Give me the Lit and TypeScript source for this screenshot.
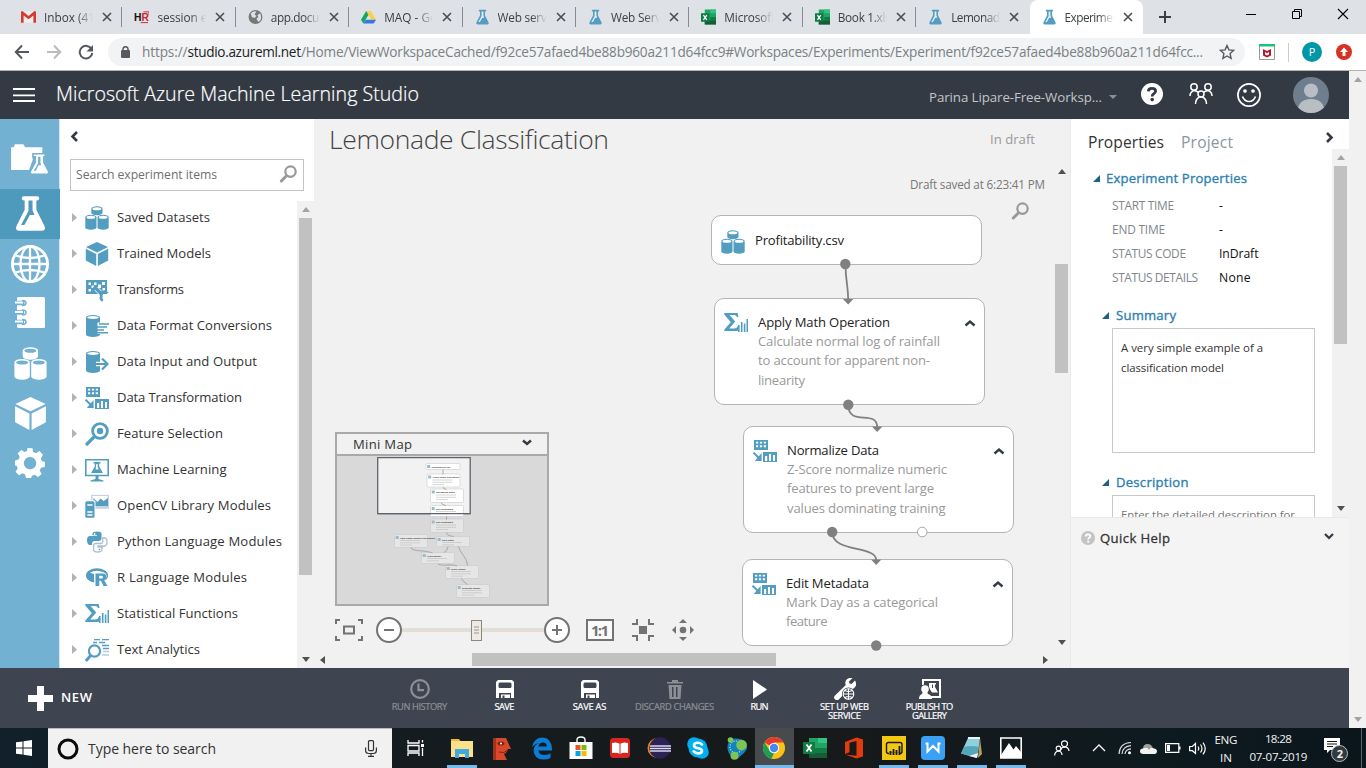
import { LitElement, html, css, svg, nothing } from "lit";
import { customElement, property } from "lit/decorators.js";

const BLUE = "#539dc0";

/** A single line of text, tracked so that it takes up exactly `w` pixels. */
@customElement("fit-text")
class FitText extends LitElement {
  @property() text = "";
  @property({ type: Number }) w = 0;
  static styles = css`
    :host { display: inline-block; white-space: pre; }
  `;
  firstUpdated() {
    const span = this.renderRoot.querySelector("span")!;
    const natural = span.getBoundingClientRect().width;
    const n = this.text.length;
    if (this.w && n > 1) {
      const gap = (this.w - natural) / (n - 1);
      this.style.letterSpacing = gap.toFixed(3) + "px";
      this.style.marginRight = (-gap).toFixed(3) + "px";
    }
  }
  render() {
    return html`<span>${this.text}</span>`;
  }
}

const t = (text: string, w: number) => html`<fit-text .text=${text} .w=${w}></fit-text>`;
const icon = (w: number, h: number, body: unknown, box = `0 0 ${w} ${h}`) =>
  html`<svg width=${w} height=${h} viewBox=${box} fill="none">${body}</svg>`;

/* ---------- shared drawings, all on a 24 by 24 field ---------- */
const drum = (x: number, y: number, w: number, h: number, c: string, hole: string) => svg`
  <path fill=${c} d="M${x} ${y + 2.4}a${w / 2} 2.4 0 0 1 ${w} 0v${h - 4.8}a${w / 2} 2.4 0 0 1 ${-w} 0z"/>
  <ellipse cx=${x + w / 2} cy=${y + 2.5} rx=${w / 2 - 1.2} ry="1.500" fill=${hole}/>`;
const drums = (c: string, hole: string) => svg`
  ${drum(6.3, 0.2, 11.2, 9, c, hole)}
  ${drum(0.3, 8.8, 11.2, 15, c, hole)}${drum(12.5, 8.8, 11.2, 15, c, hole)}`;
const cube = (c: string) => svg`
  <path fill=${c} d="M12 0 23 5 12 10.4 1 5zM.8 6.8l10.4 5.2v12L.8 18.4zM23.2 6.8l-10.4 5.2v12l10.4-5.6z"/>`;
const flask = (c: string, liquid: string) => svg`
  <path fill=${c} d="M6 1.6Q6 .2 7.4.2h9.2q1.4 0 1.4 1.4T16.6 3H16v6.500l5.600 11q1.200 3.300-2 3.300H4.400q-3.200 0-2-3.300L8 9.500V3h-.6Q6 3 6 1.600z"/>
  <path fill=${liquid} d="M10.600 3h2.800v7l1.400 3h-3.300l-1.500 3-2.200 3.800H5.500l5.100-9.500z"/>`;
const lens = svg`<circle cx="11.500" cy="6.600" r="5.200" stroke="#999" stroke-width="2.200"/><path stroke="#999" stroke-width="3" stroke-linecap="round" d="m7.300 11-5 5"/>`;
const reshape = svg`
  <path fill=${BLUE} fill-rule="evenodd" d="M1 0h14v10H1zM3 1.700v1.900h2.200V1.700zm3.900 0v1.900h2.200V1.700zm3.900 0v1.900H13V1.700zM3 5.300v1.900h2.200V5.300zm3.900 0v1.900h2.200V5.300zm3.900 0v1.900H13V5.300z"/>
  <path fill=${BLUE} fill-rule="evenodd" d="M10 12h14v10H10zm2 4v5h2.200v-5zm4-2v7h2v-7zm4 1v6h2v-6z"/>
  <path stroke=${BLUE} stroke-width="2" d="m.6 12.600 5.600 5.600"/><path fill=${BLUE} d="M8.600 13v8H1.800z"/>`;
const sigma = svg`
  <path fill=${BLUE} d="M.3 1h13.400l.8 4h-1.400q-.8-2.100-3-2.100H5.600l5.600 6.700-6 6.900h5q2.600 0 3.600-2.500h1.200L13.600 19H.3v-1.600l6.500-7.200L.3 2.600z"/>
  <path stroke=${BLUE} stroke-width="1.600" d="M14.800 13v7M17.700 10v10M20.600 11.500V20M23.300 7v13"/>`;
const chevron = (dir: "up" | "down") =>
  icon(12, 8, svg`<path stroke="#333a44" stroke-width="2.400" d=${dir === "up" ? "m1.500 6.500 4.500-4 4.500 4" : "m1.500 1.500 4.500 4 4.500-4"}/>`);

const paletteIcons: Record<string, unknown> = {
  drums: drums(BLUE, "#fff"),
  cube: cube(BLUE),
  transforms: svg`<path fill=${BLUE} d="M1 2h21v14H1z"/>
    <path fill="#fff" d="M3.500 4.500H6V7H3.500zM9 4.500h2.500V7H9zM17 4h3v3h-3zM3.500 11H6v2.500H3.500zM6.500 7.500H9V10H6.500zM13 6.500h3V10h-3zM17.500 10H20v3h-2.500z"/>
    <path stroke="#fff" stroke-width="4.600" d="m11 10.500 6 6"/><path stroke=${BLUE} stroke-width="3.400" d="m9 8.500 8.500 8.500"/>
    <path stroke=${BLUE} stroke-width="2.600" d="M22.300 15.300a3.300 3.300 0 0 0-6 3 3.300 3.300 0 0 0 1.500 4.300"/>`,
  format: svg`${drum(1, 1, 14, 22, BLUE, "#fff")}<path fill="#fff" d="M12.500 8.500H24V20H12.500z"/>
    <path stroke=${BLUE} stroke-width="1.500" d="M14 10h10M12 13h10M12 16h7M12 18.700h11"/>`,
  io: svg`${drum(1, 1, 14, 22, BLUE, "#fff")}<path stroke="#fff" stroke-width="4.600" d="M11 14h11M16.500 8l6 6-6 6"/>
    <path stroke=${BLUE} stroke-width="2.200" d="M11 14h11M17 8.500l5.500 5.500-5.500 5.500"/>`,
  reshape: svg`<g transform="translate(0 1)">${reshape}</g>`,
  feature: svg`<circle cx="15" cy="9" r="7.400" stroke=${BLUE} stroke-width="2.800"/><circle cx="15" cy="9" r="3.200" fill=${BLUE}/>
    <path stroke=${BLUE} stroke-width="3.200" stroke-linecap="round" d="m8.500 15.500-6.500 6.500"/>`,
  ml: svg`<path stroke=${BLUE} stroke-width="1.600" d="M.8 1.800h22.400v15.700H.8z"/><path fill=${BLUE} d="M10.500 18h3v3l5 1.500v1h-13v-1l5-1.500zM8.500 4h7v1.400h-1.300v3.100l3.800 6.500H6l3.800-6.500V5.400H8.500z"/>
    <path fill="#fff" d="M11.300 6h1.400v3.500l1 2h-3z"/>`,
  opencv: svg`<path fill="#c9d3de" d="M6 .8h18v14H6z"/><path fill="#fff" d="M7.500 2h15v8h-15z"/><path fill=${BLUE} d="m8 12 .5-8 4 4 3-3.500 3 2.500 4.500-3V12z"/>
    <rect x="-.8" y="6.300" width="11.300" height="18" rx="1.500" fill="#fff"/><rect x=".3" y="7.300" width="9.200" height="16.400" rx="1.500" fill=${BLUE}/><path stroke="#fff" stroke-width="1.500" d="M2.300 11h5.200M2.300 18h5.200M2.300 21h5.200"/>`,
  python: svg`<path fill=${BLUE} d="M7.500 6V3.600Q7.500 1.500 12 1.500t4.500 2.100v5q0 2.400-2.500 2.400H9.500Q7 11 7 14v1H5q-3 0-3-5 0-4 3-4h7v-.8H7.500z"/><circle cx="9.600" cy="4" r=".9" fill="#fff"/>
    <path stroke="#a9bfd2" stroke-width="1.300" d="M17.500 8h1.800q2.700 0 2.700 4t-2.700 4H13v1h4v2.500q0 2.500-4.300 2.500T8.600 19.500v-4q0-2 2.200-2h5q2 0 2-2.500z"/><circle cx="14.500" cy="19.500" r=".8" fill=${BLUE}/>`,
  r: svg`<ellipse cx="12" cy="9.500" rx="9.800" ry="6" stroke=${BLUE} stroke-width="2.400"/><path fill=${BLUE} d="M3 6q-4 5 3 9.500h3V8z"/><path fill="#fff" d="M9.600 6.500H19q4 2 2 6l-1 2 4 6H9z"/>
    <path fill=${BLUE} fill-rule="evenodd" d="M10.500 7.500h7q4 .3 4 3.500 0 2.500-2.300 3.200L22.500 20h-4l-2.600-5.300h-1.700V20h-3.700zm3.700 2.300v2.800h2.400q1.400-.2 1.400-1.400t-1.400-1.400z"/>`,
  sigma: svg`<g transform="translate(0 1)">${sigma}</g>`,
  text: svg`<path stroke=${BLUE} stroke-width="1.300" d="M9 1.700h6M17 1.700h7M8 4.500h4M14 4.500h6M17 7.500h7M18 10.500h6"/><path stroke="#b9cbdb" stroke-width="1.500" d="M18 13.500h6M17 17h7"/>
    <circle cx="9.500" cy="13" r="5.600" stroke=${BLUE} stroke-width="2.200"/><path stroke=${BLUE} stroke-width="3" stroke-linecap="round" d="m5.200 18-3.500 4"/>`,
};

/* ---------- browser frame ---------- */
const gmail = svg`<path fill="#eee" d="M1 2h14v12H1z"/><path fill="#d93a2f" d="M0 3q0-1.500 1.500-1.500L8 7l6.500-5.500Q16 1.500 16 3v11h-2.800V6.500L8 10.500 2.800 6.500V14H0z"/>`;
const chromeFlask = svg`<g transform="scale(.667)">${flask(BLUE, "#e9f1f6")}</g>`;
const excel = svg`<path fill="#21a366" d="M4 0h12v16H4z"/><path fill="#33c481" d="M10 0h6v4h-6z"/><path fill="#185c37" d="M4 11.500h12V16H4z"/><path fill="#107c41" d="M0 4h9v9H0zM10 8h6v4h-6z"/><path stroke="#fff" stroke-width="1.400" d="m2.600 6 3.600 5M6.200 6l-3.600 5"/>`;
const tabs = [
  { text: "Inbox (41", w: 51, ic: gmail },
  { text: "session ex", w: 56, ic: svg`<text x="0" y="12" class="hr" fill="#111">H</text><text x="8" y="12" class="hr" fill="#d8232a">R</text><path stroke="#d8232a" d="M7 14h8M10 2.500h6v3"/>` },
  { text: "app.docum", w: 59, ic: svg`<circle cx="8" cy="8" r="7.400" fill="#777"/><path fill="#dee1e6" d="M3 4q3-3 6-2l-2 3 2 2-2 2-3-1zM10 6l3-2q2 4 0 8l-2 1-2-3 2-2z"/>` },
  { text: "MAQ - Go", w: 53, ic: svg`<path fill="#ffcf48" d="M5.500 1.500h5L16 11h-5z"/><path fill="#11a861" d="M5.500 1.500 0 11l2.500 4L8 5.700z"/><path fill="#3777e3" d="M5 11h11l-2.500 4h-11z"/>` },
  { text: "Web servi", w: 52, ic: chromeFlask },
  { text: "Web Servi", w: 53, ic: chromeFlask },
  { text: "Microsoft", w: 51, ic: excel },
  { text: "Book 1.xls", w: 53, ic: excel },
  { text: "Lemonade", w: 55, ic: chromeFlask },
  { text: "Experimen", w: 55, ic: chromeFlask, on: true },
];

@customElement("browser-frame")
class BrowserFrame extends LitElement {
  static styles = css`
    :host { display: block; font: 12px/16px "Open Sans", "Noto Sans", sans-serif; font-size: 11.800px; color: #3c4043; }
    svg { flex: none; display: block; }
    .strip { display: flex; height: 34px; background: #dee1e6; padding-left: 9px; box-sizing: border-box; }
    .tab { width: 113.400px; box-sizing: border-box; display: flex; align-items: center; padding: 0 10px 0 12px; }
    .tab + .tab::before { content: ""; width: 1px; height: 20px; background: #888c92; margin-left: -13px; margin-right: 12px; }
    .tab.on { background: #fff; border-radius: 8px 8px 0 0; }
    .tab.on::before { visibility: hidden; }
    .name { width: 49px; margin: 0 9px 0 8px; overflow: hidden; flex: none; -webkit-mask-image: linear-gradient(90deg, #000 68%, transparent); mask-image: linear-gradient(90deg, #000 68%, transparent); }
    .hr { font: bold 11px "Liberation Sans", sans-serif; }
    .plus { margin: 11px 0 0 16px; }
    .win { margin-left: auto; display: flex; gap: 34px; padding: 8px 17px 0 0; }
    .bar { display: flex; align-items: center; height: 36px; background: #fff; padding-left: 14px; }
    .nav { display: flex; gap: 16px; margin-right: 14px; }
    .omni { width: 1137px; height: 28px; border-radius: 14px; background: #f1f3f4; display: flex; align-items: center; box-sizing: border-box; padding: 0 10px 0 13px; font-size: 13.600px; color: #7b8084; }
    .omni .host { color: #202124; }
    .url { flex: 1; padding-left: 12px; white-space: nowrap; }
    .mc { margin-left: 14px; }
    .div { width: 1px; height: 19px; background: #ccc; margin: 0 13px 0 13px; }
    .me { width: 20px; height: 20px; border-radius: 50%; background: #0097a7; color: #fff; display: grid; place-items: center; margin-right: 14px; font-size: 11px; }
    .edge { height: 1px; background: #b3b5b2; }
  `;
  render() {
    return html`
      <div class="strip">
        ${tabs.map((b) => html`<div class="tab ${b.on ? "on" : ""}">
          ${icon(15, 16, b.ic, "0 0 16 16")}<span class="name">${t(b.text, b.w)}</span>
          ${icon(10, 10, svg`<path stroke="#4a4e52" stroke-width="1.600" d="m1 1 8 8M9 1 1 9"/>`)}</div>`)}
        <span class="plus">${icon(12, 12, svg`<path stroke="#3c4043" stroke-width="2" d="M6 0v12M0 6h12"/>`)}</span>
        <div class="win">
          ${icon(12, 12, svg`<path stroke="#000" d="M1 6.500h10"/>`)}
          ${icon(12, 12, svg`<path stroke="#000" d="M1.500 3.500h7v7h-7zM3.500 3.500v-2h7v7h-2"/>`)}
          ${icon(12, 12, svg`<path stroke="#000" stroke-width="1.100" d="m1 1 10 10M11 1 1 11"/>`)}
        </div>
      </div>
      <div class="bar">
        <div class="nav">
          ${icon(16, 16, svg`<path stroke="#55595e" stroke-width="2" d="M15 8H2M8 1.500 1.800 8 8 14.500"/>`)}
          ${icon(16, 16, svg`<path stroke="#b9bbbe" stroke-width="2" d="M1 8h13M8 1.500 14.200 8 8 14.500"/>`)}
          ${icon(16, 16, svg`<path stroke="#55595e" stroke-width="2" d="M13.500 5A6.300 6.300 0 1 0 14.300 9"/><path fill="#55595e" d="M15 1v6.500H8.500z"/>`)}
        </div>
        <div class="omni">
          ${icon(9, 12, svg`<rect y="4" width="9" height="8" rx="1" fill="#55595e"/><path stroke="#55595e" stroke-width="1.500" d="M2 5V3a2.500 2.300 0 0 1 5 0v2"/>`)}
          <span class="url">${t("https://", 45.500)}<span class="host">${t("studio.azureml.net", 113.500)}</span>${t("/Home/ViewWorkspaceCached/f92ce57afaed4be88b960a211d64fcc9#Workspaces/Experiments/Experiment/f92ce57afaed4be88b960a211d64fcc...", 902)}</span>
          ${icon(16, 16, svg`<path stroke="#55595e" stroke-width="1.400" d="m8 1.500 1.900 4.400 4.700.5-3.500 3.200 1 4.800L8 12l-4.100 2.400 1-4.800L1.400 6.400l4.700-.5z"/>`)}
        </div>
        <svg class="mc" width="16" height="16" viewBox="0 0 16 16" fill="none">
          <path fill="#fff" stroke="#999" d="M.5.500h15v15H.5z"/><path fill="#19c37d" d="M0 0h16v2.500H0z"/><path fill="#b4182d" d="M4 5l4 2 4-2v6.500L8 13.500l-4-2z"/><path fill="#fff" d="M6 8l2 1.200L10 8v2.500l-2 1-2-1z"/></svg>
        <span class="div"></span><span class="me">P</span>
        ${icon(16, 16, svg`<circle cx="8" cy="8" r="8" fill="#d93025"/><path fill="#fff" d="M8 3.500 12 8H9.500v4h-3V8H4z"/>`)}
      </div>
      <div class="edge"></div>`;
  }
}

/* ---------- scroll bars ---------- */
@customElement("scroll-bar")
class ScrollBar extends LitElement {
  @property({ type: Number }) from = 0;
  @property({ type: Number }) size = 0;
  @property({ type: Boolean, reflect: true }) flat = false;
  @property() up = "#505050";
  @property() down = "#505050";
  static styles = css`
    :host { display: flex; flex-direction: column; justify-content: space-between; align-items: center; width: 17px; background: #f1f1f1; position: relative; flex: none; box-sizing: border-box; padding: 6px 0; }
    :host([flat]) { flex-direction: row; width: auto; height: 17px; padding: 0 5px; }
    .thumb { position: absolute; left: 2px; width: 13px; background: #c1c1c1; }
    :host([flat]) .thumb { left: auto; top: 2px; height: 13px; width: auto; }
    svg { display: block; }
  `;
  render() {
    const place = this.flat ? `left:${this.from}px;width:${this.size}px` : `top:${this.from}px;height:${this.size}px`;
    return html`
      ${this.flat ? icon(5, 8, svg`<path fill=${this.up} d="M5 0v8L0 4z"/>`) : icon(8, 5, svg`<path fill=${this.up} d="M0 5h8L4 0z"/>`)}
      ${this.size ? html`<div class="thumb" style=${place}></div>` : nothing}
      ${this.flat ? icon(5, 8, svg`<path fill=${this.down} d="M0 0v8l5-4z"/>`) : icon(8, 5, svg`<path fill=${this.down} d="M0 0h8L4 5z"/>`)}`;
  }
}

/* ---------- studio header ---------- */
@customElement("studio-header")
class StudioHeader extends LitElement {
  static styles = css`
    :host { display: flex; height: 48px; background: #343a43; color: #fff; align-items: center; font-family: "Open Sans", "Noto Sans", sans-serif; padding: 0 20px 0 13px; box-sizing: border-box; }
    svg { display: block; flex: none; }
    .title { margin: -3px 0 0 21px; font-size: 19.600px; font-weight: 300; -webkit-text-stroke: .2px #fff; flex: 1; }
    .ws { font-size: 13.300px; color: #c3c5c9; display: flex; align-items: center; margin-right: 24px; padding-top: 3px; }
    .ws svg { margin-left: 7px; }
    .tools { display: flex; align-items: center; margin-top: -2px; }
    .people { margin-left: 26px; }
    .smile { margin: 2px 0 0 24px; }
    .face { margin: 2px 0 0 32px; }
  `;
  render() {
    return html`
      ${icon(22, 14, svg`<path stroke="#fff" stroke-width="1.800" d="M0 1h22M0 7.300h22M0 13h22"/>`)}
      <span class="title">${t("Microsoft Azure Machine Learning Studio", 363)}</span>
      <span class="ws">${t("Parina Lipare-Free-Worksp...", 173)}${icon(8, 4, svg`<path fill="#8b9097" d="M0 0h8L4 4z"/>`)}</span>
      <div class="tools">
        ${icon(22, 22, svg`<circle cx="11" cy="11" r="11" fill="#fff"/><path stroke="#343a43" stroke-width="2.800" d="M7.300 8.300Q7.500 5.300 11 5.300t3.600 2.800q0 1.800-2 2.800-1.400.8-1.400 2.600"/><circle cx="11.200" cy="16.600" r="1.800" fill="#343a43"/>`)}
        <svg class="people" width="24" height="22" viewBox="0 0 24 22" fill="none" stroke="#fff" stroke-width="1.500"><circle cx="5" cy="4" r="3.200"/><circle cx="19" cy="4" r="3.200"/><circle cx="12" cy="11" r="3"/><path d="M1 13q0-4 4-5.500 3 .5 4.500 2M23 13q0-4-4-5.500-3 .5-4.500 2M6.500 21q0-5 4-7h3q4 2 4 7"/></svg>
        <svg class="smile" width="24" height="24" viewBox="0 0 24 24" fill="none" stroke="#fff" stroke-width="1.700"><circle cx="12" cy="12" r="11.100"/><path d="M5.500 13.500q2 5 6.500 5t6.500-5"/><circle cx="8" cy="8" r="1" fill="#fff"/><circle cx="16" cy="8" r="1" fill="#fff"/></svg>
        <svg class="face" width="36" height="36" viewBox="0 0 36 36"><defs><clipPath id="a"><circle cx="18" cy="18" r="18"/></clipPath></defs><circle cx="18" cy="18" r="18" fill="#6f7e8e"/><g clip-path="url(#a)" fill="#b8bec4"><circle cx="18" cy="13.500" r="7"/><path d="M4.500 36q0-14 13.500-14t13.500 14z"/></g></svg>
      </div>`;
  }
}

/* ---------- left rail ---------- */
const rail = [
  icon(38, 31, svg`<path fill="#fff" d="M0 3h3l1-3h9l2 3h18v9H22l1 4-4 11H0z"/><path fill="#fff" stroke="#72b1d2" stroke-width="1.500" d="M23 10h13v3h-1.500v6l5 9.500q.5 3-2 3h-15q-3 0-2-3l5-9.500v-6H23z"/><path fill="#72b1d2" d="M28.500 13h2.500v7l1 2h-3l-3 6h-2l4.500-8z"/>`, "0 0 40 32"),
  icon(33, 35, flask("#fff", "#4e9abd"), "1 0 22 24"),
  icon(38, 38, svg`<g stroke="#fff" stroke-width="2.300"><circle cx="19" cy="19" r="17.600" stroke-width="2.800"/><ellipse cx="19" cy="19" rx="9.500" ry="17.600"/><path d="M19 1v36M1 19h36M4.500 10.500q14.500 5 29 0M4.500 27.500q14.500-5 29 0"/></g>`),
  icon(30, 31, svg`<path fill="#fff" d="M2 1.500Q2 0 3.500 0h25Q30 0 30 1.500v28q0 1.500-1.500 1.500h-25Q2 31 2 29.500z"/><g stroke="#72b1d2" stroke-width="4.600"><path d="M0 6h9.500M0 15.500h9M0 25h9"/></g><g stroke="#fff" stroke-width="1.800"><path d="M0 5.500h8M0 15h8M0 24.500h8"/></g><path stroke="#72b1d2" stroke-width="1.500" d="M7 3.500q4 0 4 2.500t-4 2.500M7 13q4 0 4 2.500T7 18M7 22.500q4 0 4 2.500t-4 2.500"/>`),
  icon(33, 35, drums("#fff", "#72b1d2"), "0 0 24 24"),
  icon(33, 35, cube("#fff"), "0 0 24 24"),
  icon(30, 30, svg`<path fill="#fff" fill-rule="evenodd" d="m12.500 0 5 .2.700 3.800 2.800 1.200L24.500 3 28 6.700l-2.200 3.500 1 2.800 3.200 1-.2 5-3.800.8-1.300 2.800 2 3.400-3.600 3-3.300-2.200-2.800 1-1 2.200h-5l-.8-3.500-2.700-1.200-3.500 2-3.500-3.500 2.200-3.300-1-2.700L0 17.500v-5l3.500-1 1.200-2.800L2.700 5.200 6.200 2l3.300 2 2.500-1zM15 9a6.200 6.200 0 1 0 .1 0z"/>`),
];

@customElement("side-rail")
class SideRail extends LitElement {
  static styles = css`
    :host { display: flex; flex-direction: column; width: 60px; box-sizing: border-box; background: #72b1d2; padding-top: 20px; border-right: 1px solid #d5e4ee; flex: none; }
    .item { height: 50px; width: 60px; display: grid; place-items: center; flex: none; box-sizing: border-box; padding-bottom: 1px; }
    .item:first-child { padding-bottom: 9px; }
    .item:nth-child(3) { padding-bottom: 0; }
    .item:nth-child(4) { padding-bottom: 3px; }
    .item:last-child { padding-bottom: 2px; }
    .item.on { background: #4e9abd; }
    svg { display: block; }
  `;
  render() {
    return rail.map((r, i) => html`<div class="item ${i === 1 ? "on" : ""}">${r}</div>`);
  }
}

/* ---------- module palette ---------- */
const modules: [string, string, number][] = [
  ["drums", "Saved Datasets", 93], ["cube", "Trained Models", 94], ["transforms", "Transforms", 67],
  ["format", "Data Format Conversions", 155], ["io", "Data Input and Output", 140], ["reshape", "Data Transformation", 125],
  ["feature", "Feature Selection", 106], ["ml", "Machine Learning", 109.500], ["opencv", "OpenCV Library Modules", 154],
  ["python", "Python Language Modules", 165], ["r", "R Language Modules", 130], ["sigma", "Statistical Functions", 121], ["text", "Text Analytics", 83],
];

@customElement("module-palette")
class ModulePalette extends LitElement {
  static styles = css`
    :host { display: flex; flex-direction: column; width: 254px; flex: none; background: #fff; color: #333; font: 13.100px/20px "Open Sans", "Noto Sans", sans-serif; border-right: 1px solid #f1f1f1; }
    svg { display: block; flex: none; }
    .back { padding: 12px 0 0 10px; height: 28px; }
    .search { margin: 0 10px 8px; height: 32px; border: 1px solid #c4c4c4; box-sizing: border-box; display: flex; align-items: center; justify-content: space-between; padding: 0 4px 0 5px; font-size: 12.200px; color: #6f6f6f; }
    .find { margin: -2px 1px 0 0; }
    .body { display: flex; flex: 1; min-height: 0; }
    .list { flex: 1; overflow: hidden; }
    .row { height: 36px; display: flex; align-items: center; padding-left: 12px; }
    .row .ic { margin: 2px 8px 0 8px; }
    scroll-bar { margin-top: 2px; }
  `;
  render() {
    return html`
      <div class="back">${icon(8, 11, svg`<path stroke="#333a44" stroke-width="2.600" d="M7 1 2.500 5.500 7 10"/>`)}</div>
      <div class="search">${t("Search experiment items", 141)}<span class="find">${icon(20, 20, svg`<g transform="translate(1 1)">${lens}</g>`)}</span></div>
      <div class="body">
        <div class="list">
          ${modules.map(([k, name, w]) => html`<div class="row">${icon(5, 9, svg`<path fill="#b3b3b3" d="M0 0v9l5-4.500z"/>`)}
            <span class="ic">${icon(24, 24, paletteIcons[k])}</span>${t(name, w)}</div>`)}
        </div>
        <scroll-bar .from=${17} .size=${357} up="#a3a3a3"></scroll-bar>
      </div>`;
  }
}

/* ---------- experiment canvas ---------- */
interface Step { x: number; y: number; h: number; kind: string; name: string; w: number; lines: [string, number][]; }
const steps: Step[] = [
  { x: 711, y: 215, h: 50, kind: "drums", name: "Profitability.csv", w: 89, lines: [] },
  { x: 714, y: 298, h: 107, kind: "sigma", name: "Apply Math Operation", w: 132, lines: [["Calculate normal log of rainfall", 182], ["to account for apparent non-", 172], ["linearity", 47]] },
  { x: 743, y: 426, h: 106.500, kind: "reshape", name: "Normalize Data", w: 92, lines: [["Z-Score normalize numeric", 160], ["features to prevent large", 147], ["values dominating training", 158.500]] },
  { x: 742, y: 559, h: 87, kind: "reshape", name: "Edit Metadata", w: 83, lines: [["Mark Day as a categorical", 152], ["feature", 41.500]] },
];
const OX = 315, OY = 163;

const mini: [number, number, number, number, string, number][] = [
  [426, 463.500, 34, 6, "Profitability.csv", 0], [427, 474, 33, 13, "Apply Math Operation", 3], [430.500, 489, 33, 13.500, "Normalize Data", 3], [430.500, 505.500, 33, 11, "Edit Metadata", 2],
  [430.500, 519, 33, 13.500, "Edit Metadata", 3], [394.500, 534.500, 33, 13, "Two-Class Logistic Regression", 3], [436.500, 536.500, 33, 10, "Split Data", 2], [421.500, 552.500, 33, 11, "Train Model", 2],
  [445.500, 565.500, 33, 13, "Score Model", 3], [456.500, 584.500, 33, 13, "Evaluate Model", 3],
];

@customElement("mini-map")
class MiniMap extends LitElement {
  static styles = css`
    :host { display: block; box-sizing: border-box; width: 214px; height: 174px; border: 2px solid #a9a9a9; font: 13.100px/20px "Open Sans", "Noto Sans", sans-serif; color: #333; }
    .head { height: 20px; border-bottom: 2px solid #a9a9a9; display: flex; align-items: center; justify-content: space-between; padding: 0 15px 0 16px; }
    .head svg { margin-top: -3px; }
    svg { display: block; }
    .tiny { font: bold 2.400px "Open Sans", sans-serif; fill: #444; }
  `;
  render() {
    return html`<div class="head">${t("Mini Map", 59)}${icon(10, 7, svg`<path stroke="#333a44" stroke-width="2.400" d="m1 1.500 4 3.500 4-3.500"/>`)}</div>
      <svg width="210" height="148" viewBox="337 456 210 148">
        <path fill="#d9d9d9" d="M337 456h210v148H337z"/>
        <path fill="#f2f2f2" stroke="#5d646e" stroke-width="1.300" d="M377.700 457.700h92.500v56h-92.500z"/>
        ${mini.map(([x, y, w, h, name, n], i) => svg`<rect x=${x} y=${y} width=${w} height=${h} rx="1" fill=${i < 4 ? "#fff" : "#e6e6e6"} stroke="#c9c9c9" stroke-width=".6"/>
          <rect x=${x + 1.200} y=${y + 1.500} width="3" height="3" fill="#9db9cd"/><text class="tiny" x=${x + 5.500} y=${y + 4}>${name}</text>
          ${Array.from({ length: n }, (_, k) => svg`<path stroke="#bbb" stroke-width=".6" d="M${x + 5.500} ${y + 6 + k * 2.300}h${k === n - 1 ? 12 : 20}"/>`)}`)}
        <g fill="none" stroke="#999" stroke-width=".8"><path d="M443 469.500v5M443 487q0 2 3.500 2.500M441 502.500q0 2 5 3M446.500 516.500v3M446.500 532.500q0 3 7 4M411 547.500q0 3 12 3.500 8 1 9.500 2M448 546.500q0 4-4 6M458.500 546.500q1 4 5 9 4 5 4 10M438 563.500q0 2 12 1.500 5 0 7 1M461.500 578.500q1 3 6 6"/></g>
        <path fill="none" stroke="#5d646e" stroke-width="1.300" d="M377.700 513.700h92.500"/>
      </svg>`;
  }
}

@customElement("experiment-canvas")
class ExperimentCanvas extends LitElement {
  static styles = css`
    :host { display: flex; flex-direction: column; width: 755px; flex: none; background: #f1f1f1; font: 13.100px/19px "Open Sans", "Noto Sans", sans-serif; border-right: 1px solid #e9e9e9; }
    svg { display: block; flex: none; }
    .head { height: 44px; box-sizing: border-box; display: flex; justify-content: space-between; padding: 0 35px 0 14px; color: #999; }
    .name { font-size: 26.500px; line-height: 41px; font-weight: 300; color: #444; }
    .state { line-height: 40px; }
    .body { flex: 1; display: flex; min-height: 0; }
    .surface { flex: 1; position: relative; overflow: hidden; }
    .saved { text-align: right; padding: 11px 8px 0 0; font-size: 11.700px; line-height: 20px; color: #777; }
    .find { display: flex; justify-content: flex-end; padding: 8px 24px 0 0; }
    .node { position: absolute; width: 271px; box-sizing: border-box; background: #fff; border: 1px solid #b4b4b4; border-radius: 10px; display: flex; padding: 13px 8px 0 9px; }
    .node.short { padding-top: 14px; }
    .copy { flex: 1; margin: 1px 0 0 10px; color: #999; }
    .copy .title { color: #222; }
    .copy div { height: 19.200px; white-space: nowrap; }
    .node .chev { margin-top: 7px; }
    .wires { position: absolute; inset: 0; }
    .map { position: absolute; left: 20px; top: 269px; }
    .tools { position: absolute; left: 20px; top: 454px; display: flex; align-items: center; height: 26px; }
    .out { margin-left: 13px; }
    .pan { margin-left: 18px; }
    .one { border: 2px solid #737373; width: 28px; height: 22px; box-sizing: border-box; font: bold 15px/18px "Open Sans", sans-serif; color: #737373; display: grid; place-items: center; margin: 0 18px 0 16px; background: #fafafa; }
    .rail { width: 142px; height: 4px; background: #e2ddd7; display: flex; align-items: center; justify-content: center; }
    .grip { width: 11px; height: 21px; box-sizing: border-box; border: 1px solid #8f887f; background: #efeae5; margin-left: 6px; display: grid; place-items: center; }
    .across { margin-right: 17px; }
  `;
  render() {
    return html`
      <div class="head"><span class="name">${t("Lemonade Classification", 280)}</span><span class="state">${t("In draft", 45)}</span></div>
      <div class="body">
        <div class="surface">
          <div class="saved">${t("Draft saved at 6:23:41 PM", 135)}</div>
          <div class="find">${icon(18, 18, lens, "0 0 18 18")}</div>
          ${steps.map((s) => html`<div class="node ${s.lines.length ? "" : "short"}" style="left:${s.x - OX}px;top:${s.y - OY}px;height:${s.h}px">
            ${icon(24, 24, s.kind === "drums" ? drums(BLUE, "#fff") : s.kind === "sigma" ? sigma : reshape)}
            <div class="copy"><div class="title">${t(s.name, s.w)}</div>${s.lines.map(([l, w]) => html`<div>${t(l, w)}</div>`)}</div>
            ${s.lines.length ? html`<span class="chev">${chevron("up")}</span>` : nothing}</div>`)}
          <svg class="wires" width="739" height="488" viewBox="315 163 739 488">
            <g fill="none" stroke="#808080" stroke-width="1.800">
              <path d="M845.500 264q0 10 1.500 20 1 8 1.200 15"/><path d="M848.300 405C848.300 427 877 409 877.200 427"/><path d="M832.200 532C832 553 876 545 876.200 560"/>
            </g>
            <g fill="#808080">
              <path d="M843 299h10.400l-5.200 5.500zM872 426.500h10.400l-5.200 5.500zM871 559.500h10.400l-5.200 5.500z"/>
              <circle cx="845.300" cy="264" r="5.200"/><circle cx="848.300" cy="404.700" r="5.200"/><circle cx="832.200" cy="532" r="5.200"/><circle cx="876.200" cy="645.500" r="5.200"/>
            </g>
            <circle cx="922.200" cy="532" r="4.800" fill="#fff" stroke="#a8a8a8"/>
          </svg>
          <mini-map class="map"></mini-map>
          <div class="tools">
            ${icon(28, 22, svg`<g stroke="#737373" stroke-width="2"><path d="M1 5V1h4M23 1h4v4M27 17v4h-4M5 21H1v-4M9 7.500h10v7H9z"/></g>`)}
            <svg class="out" width="26" height="26" viewBox="0 0 26 26" fill="none"><circle cx="13" cy="13" r="12" fill="#fff" stroke="#737373" stroke-width="2"/><path stroke="#737373" stroke-width="2" d="M8 13h10"/></svg>
            <div class="rail"><div class="grip">${icon(5, 8, svg`<path stroke="#9a938b" d="M0 1h5M0 4h5M0 7h5"/>`)}</div></div>
            ${icon(26, 26, svg`<circle cx="13" cy="13" r="12" fill="#fff" stroke="#737373" stroke-width="2"/><path stroke="#737373" stroke-width="2" d="M8 13h10M13 8v10"/>`)}
            <span class="one">${t("1:1", 18)}</span>
            ${icon(22, 22, svg`<path fill="#737373" d="M7 7h8v8H7z"/><path stroke="#737373" stroke-width="2" d="M0 5h5V0M17 0v5h5M22 17h-5v5M5 22v-5H0"/>`)}
            <svg class="pan" width="22" height="22" viewBox="0 0 22 22" fill="#737373"><circle cx="11" cy="11" r="3.300"/><path d="M7 4h8l-4-4zM7 18h8l-4 4zM4 7v8l-4-4zM18 7v8l4-4z"/></svg>
          </div>
        </div>
        <scroll-bar .from=${101} .size=${109}></scroll-bar>
      </div>
      <scroll-bar class="across" flat .from=${157} .size=${304}></scroll-bar>`;
  }
}

/* ---------- properties ---------- */
@customElement("property-panel")
class PropertyPanel extends LitElement {
  static styles = css`
    :host { display: flex; flex-direction: column; width: 278px; flex: none; background: #fff; box-sizing: border-box; font: 12.200px/24px "Open Sans", "Noto Sans", sans-serif; color: #111; }
    svg { display: block; flex: none; }
    .tabs { height: 30px; display: flex; padding: 0 15px 0 17px; font-size: 15.600px; color: #333; box-sizing: border-box; }
    .tabs > * { padding-top: 11px; margin-right: 17px; }
    .tabs .off { color: #8f959b; }
    .tabs .chev { margin: 2px 0 0 auto; }
    .body { flex: 1; display: flex; min-height: 0; }
    .form { flex: 1; overflow: hidden; padding: 17px 0 0 22px; }
    .h { display: flex; align-items: center; color: #2d80b0; font-size: 13.100px; font-weight: 400; -webkit-text-stroke: .35px #2d80b0; height: 24px; gap: 6px; }
    .h.sub { margin-left: 9px; gap: 7px; }
    .row { display: flex; margin-left: 19px; height: 24px; }
    .row.first { margin-top: 3px; }
    .k { width: 107px; color: #80868b; font-size: 11.900px; }
    .v { padding-top: .6px; }
    .box { margin: 1px 0 0 19px; width: 203px; height: 125px; box-sizing: border-box; border: 1px solid #c9c9c9; padding: 9px 8px; font-size: 11.400px; line-height: 20px; color: #333; }
    .gap { height: 14px; }
    .gap.two { height: 17px; }
    .box.ph { color: #777; }
    .help { height: 151px; background: #f4f4f4; border-top: 1px solid #e9e9e9; box-sizing: border-box; display: flex; align-items: flex-start; padding: 11px 15px 0 10px; font-size: 13.100px; line-height: 18px; color: #333; -webkit-text-stroke: .3px #333; }
    .help span { margin-left: 5px; flex: 1; }
    .help .q { margin-top: 2px; }
    .help .d { margin-top: 4px; }
  `;
  head(text: string, w: number, sub = false) {
    return html`<div class="h ${sub ? "sub" : ""}">${icon(7, 7, svg`<path fill="#1c6187" d="M7 0v7H0z"/>`)}${t(text, w)}</div>`;
  }
  render() {
    const rows: [string, number, string, number][] = [["START TIME", 62, "-", 0], ["END TIME", 53, "-", 0], ["STATUS CODE", 74, "InDraft", 39.500], ["STATUS DETAILS", 86, "None", 31.500]];
    return html`
      <div class="tabs"><span>${t("Properties", 76)}</span><span class="off">${t("Project", 52)}</span><span class="chev">${icon(8, 11, svg`<path stroke="#333a44" stroke-width="2.600" d="m1 1 4.500 4.500L1 10"/>`)}</span></div>
      <div class="body">
        <div class="form">
          ${this.head("Experiment Properties", 141)}
          ${rows.map(([k, w, v, vw], i) => html`<div class="row ${i ? "" : "first"}"><span class="k">${t(k, w)}</span><span class="v">${t(v, vw)}</span></div>`)}
          <div class="gap"></div>
          ${this.head("Summary", 60, true)}
          <div class="box">${t("A very simple example of a", 142)}<br>${t("classification model", 103)}</div>
          <div class="gap two"></div>
          ${this.head("Description", 72.500, true)}
          <div class="box ph">${t("Enter the detailed description for", 174)}</div>
        </div>
        <scroll-bar .from=${17} .size=${178} up="#a3a3a3"></scroll-bar>
      </div>
      <div class="help"><svg class="q" width="14" height="14" viewBox="0 0 14 14" fill="none"><circle cx="7" cy="7" r="7" fill="#c4c4c4"/><path stroke="#fff" stroke-width="1.800" d="M4.700 5.500Q4.800 3.300 7 3.300t2.300 1.900q0 1.200-1.300 1.800-.8.500-.8 1.500"/><circle cx="7.200" cy="10.700" r="1.100" fill="#fff"/></svg>
        <span>${t("Quick Help", 70)}</span><svg class="d" width="10" height="7" viewBox="0 0 10 7" fill="none"><path stroke="#333a44" stroke-width="2.200" d="m1 1 4 4 4-4"/></svg></div>`;
  }
}

/* ---------- command bar ---------- */
const floppy = icon(18, 18, svg`<path fill="#fff" fill-rule="evenodd" d="M2 0h14l2 2v16h-3v-5H3v5H0V2zM4 2.500q-1.500 0-1.500 1.500v2.500Q2.500 8 4 8h10q1.500 0 1.500-1.500V4q0-1.500-1.500-1.500z"/><path fill="#fff" fill-rule="evenodd" d="M5 14.500h9V18H5zm1.500 1V18h2v-2.500z"/>`);
const commands: { ic: unknown; lines: [string, number][]; off?: boolean }[] = [
  { ic: icon(20, 20, svg`<circle cx="10" cy="10" r="8.800" stroke="#8b9097" stroke-width="2.200"/><path stroke="#8b9097" stroke-width="2.200" d="M8.500 4.500v6.700H14"/>`), lines: [["RUN HISTORY", 55.500]], off: true },
  { ic: floppy, lines: [["SAVE", 20]] },
  { ic: floppy, lines: [["SAVE AS", 33.500]] },
  { ic: icon(16, 19, svg`<path fill="#8b9097" fill-rule="evenodd" d="M0 2h5V0h6v2h5v1.500H0zM1.500 5h13l-1 14h-11zM5 7v10h1.500V7zm4 0v10h1.500V7z"/>`), lines: [["DISCARD CHANGES", 79]], off: true },
  { ic: icon(14, 19, svg`<path fill="#fff" d="m0 0 14 9.500L0 19z"/>`), lines: [["RUN", 18]] },
  { ic: icon(22, 22, svg`<path fill="#fff" d="M21 2.500 17.500 6l-2-.5-.5-2L18.500 0Q13-.500 11.500 3.500q-.5 2 .3 3.500L1 17.500q-2 2 0 3.800t4 0L15 11q5 1 7-3.500.5-2.500-1-5z"/><circle cx="14.500" cy="16" r="6.500" fill="#3f4550"/><g stroke="#fff" stroke-width="1.100"><circle cx="14.500" cy="16" r="5.300"/><path d="M9 16h11M14.500 10.500v11M11 12.500q3.500 2 7 0M11 19.500q3.500-2 7 0"/></g>`), lines: [["SET UP WEB", 49], ["SERVICE", 33]] },
  { ic: icon(22, 20, svg`<path stroke="#fff" stroke-width="2" d="M4 6V1h17v17h-9"/><path fill="#fff" d="M10 4h7v1.500h-1V8l3 5.500H13L10 9z"/><path stroke="#3f4550" d="M13.500 5.500V9"/><circle cx="6" cy="10" r="4.600" fill="#3f4550"/><circle cx="6" cy="10" r="3.800" fill="#fff"/><path fill="#fff" d="M4 12h4l1 3q4 1 4 5H0q0-4 3-5z"/>`), lines: [["PUBLISH TO", 47.500], ["GALLERY", 35]] },
];

@customElement("command-bar")
class CommandBar extends LitElement {
  static styles = css`
    :host { display: flex; height: 60px; background: #3f4550; color: #fff; font: 9.300px/9.300px "Open Sans", "Noto Sans", sans-serif; }
    svg { display: block; }
    .new { width: 349px; display: flex; align-items: center; padding-left: 28px; gap: 8px; font-size: 13px; font-weight: 600; }
    .cmd { width: 85px; display: flex; flex-direction: column; align-items: center; -webkit-text-stroke: .2px; }
    .cmd.off { color: #8b9097; }
    .ic { height: 34px; display: grid; place-items: center; padding-top: 8px; box-sizing: border-box; margin-bottom: -.5px; }
    .line { height: 9.300px; }
  `;
  render() {
    return html`<div class="new">${icon(25, 25, svg`<path fill="#fff" d="M9 0h7v9h9v7h-9v9H9v-9H0V9h9z"/>`)}${t("NEW", 31)}</div>
      ${commands.map((c) => html`<div class="cmd ${c.off ? "off" : ""}"><div class="ic">${c.ic}</div>${c.lines.map(([l, w]) => html`<div class="line">${t(l, w)}</div>`)}</div>`)}`;
  }
}

/* ---------- desktop task bar ---------- */
const apps: { ic: unknown; open?: boolean; on?: boolean }[] = [
  { open: true, ic: svg`<path fill="#f5b83d" d="M1 3h8l2 3H1z"/><path fill="#ffe08a" d="M1 5h22v16H1z"/><path fill="#3fa9e0" d="M5 13h14v9h-4v-4H9v4H5z"/>` },
  { ic: svg`<path fill="#d9482b" d="M2 2h13l5 11h-3q-1 4-4 5l3 6H2z"/><path fill="#a7321b" d="M2 2h3v22H2z"/><ellipse cx="10" cy="7.500" rx="3.500" ry="2" fill="#7e2413"/><circle cx="10" cy="7.500" r="1" fill="#fff"/><path stroke="#7e2413" d="M8 16q5 2 9-2"/>` },
  { ic: svg`<path fill="#0c7cd5" d="M2 11Q4 1.500 12.500 1.500T22 12.500v2H8.500q.5 4.500 6 4.500 4 0 6-1.800V22q-3 1.500-7 1.500Q4 23.500 3.500 14 4 9 9 7q-4 .5-7 4zM8.500 10.500h8.300Q16.800 6.500 13 6.500T8.500 10.500z"/>` },
  { ic: svg`<path stroke="#fff" stroke-width="1.400" d="M8 7V4q0-3 4-3t4 3v3"/><path fill="#fff" d="M.5 6h23v17H.5z"/><path fill="#f25022" d="M6.500 9h5v5h-5z"/><path fill="#7fba00" d="M12.500 9h5v5h-5z"/><path fill="#00a4ef" d="M6.500 15h5v5h-5z"/><path fill="#ffb900" d="M12.500 15h5v5h-5z"/>` },
  { ic: svg`<rect x="2" y="2" width="20" height="20" rx="3.500" fill="#d7261e"/><path fill="#fff" d="M4 7q5-1.500 8 1 3-2.500 8-1v10q-5-1-8 1-3-2-8-1z"/><path stroke="#d7261e" d="M12 8v10"/>` },
  { ic: svg`<circle cx="10.500" cy="12" r="10" fill="#e8891c"/><circle cx="13" cy="12" r="10.700" fill="#2c2255"/><path stroke="#d9d9ef" stroke-width="1.500" d="M3 10h21M3 12.500h21M3 15h21"/>` },
  { ic: svg`<circle cx="8" cy="8" r="6.800" fill="#00aff0"/><circle cx="16" cy="16" r="6.800" fill="#00aff0"/><circle cx="12" cy="12" r="9.500" fill="#00aff0"/><path stroke="#fff" stroke-width="2.600" stroke-linecap="round" d="M16 8.500Q14.500 6.800 12 6.800q-4 0-4 2.700 0 2 4 2.700t4 2.600q0 2.600-4 2.600-3 0-4.300-2.100"/>` },
  { ic: svg`<path fill="#1583b8" d="M6 3q9-2 15 3 3 6-2 11l-7 6q-8-2-9.500-10Q2 7 6 3z"/><circle cx="11" cy="11" r="6" stroke="#b8e5f5" stroke-width="1.200" stroke-dasharray="1 1.500"/><circle cx="5.500" cy="4" r="2.800" fill="#7cc455"/><circle cx="16.500" cy="9" r="5.300" fill="#7cc455"/><circle cx="9.500" cy="19.800" r="4" fill="#7cc455"/>` },
  { open: true, on: true, ic: svg`<circle cx="12" cy="12" r="11" fill="#fbc116"/><path fill="#e33b2e" d="M12 12 2.500 6.500A11 11 0 0 1 21.500 6.500H12z"/><path fill="#1f9d55" d="M2.500 6.500 8 15l4 2-2.500 5.800A11 11 0 0 1 2.500 6.500z"/><circle cx="12" cy="12" r="5.200" fill="#fff"/><circle cx="12" cy="12" r="4.200" fill="#4587f3"/>` },
  { ic: svg`<path fill="#21a366" d="M6 2h18v20H6z"/><path fill="#33c481" d="M15 2h9v5h-9z"/><path fill="#185c37" d="M6 17h18v5H6z"/><path fill="#107c41" d="M0 6h12v12H0zM12 12h12v5H12z"/><path stroke="#fff" stroke-width="1.800" d="m3.500 8.500 5 7M8.500 8.500l-5 7"/>` },
  { ic: svg`<path fill="#e23c0c" d="M3 6 14.500 1.500 21 3.500v17l-6.500 2L3 18.500l11.500 1.300V5L7.500 6.800v9.400L3 18z"/>` },
  { open: true, ic: svg`<path fill="#f2c811" d="M0 0h24v24H0z"/><rect x="4.500" y="6.500" width="15.500" height="11" rx="2" stroke="#1a1a1a" stroke-width="1.400"/><path stroke="#f2c811" stroke-width="3" d="M7 18.500h11"/><path stroke="#1a1a1a" stroke-width="1.800" d="M8.500 19v-4M11.500 19v-6M14.500 19v-5M17.500 19v-9"/>` },
  { open: true, ic: svg`<rect width="24" height="24" rx="4" fill="#3aa1f5"/><path stroke="#fff" stroke-width="2" d="M4.500 7.500H6.500V15.500L12 10l5.500 5.500V7.500h2"/>` },
  { open: true, ic: svg`<path fill="#b99a5a" d="m20 2 2 16-4 4z"/><path fill="#8ed0dd" d="m8 2 12 .5-3 19.500L1 17.500z"/><path fill="#55a6b9" d="M4 11q7-2 15 0l-2 11-16-4.500z"/><path stroke="#e8f6f8" stroke-width="2" d="M8 2h12"/><path fill="#eef" d="m9 20 8 2 1-5z"/>` },
  { open: true, ic: svg`<path stroke="#fff" stroke-width="1.600" d="M1.800 2h20.400v20H1.800z"/><path fill="#fff" d="M2 19 10 7l4.500 6.500L17 10l5 6v6H2z"/>` },
];

@customElement("task-bar")
class TaskBar extends LitElement {
  static styles = css`
    :host { display: flex; height: 40px; background: linear-gradient(90deg, #11202a 0, #161b1d 40%, #17191a 62%, #0d1a20 85%, #0b161c); font: 11.600px/18px "Open Sans", "Noto Sans", sans-serif; color: #f2f2f2; }
    svg { display: block; flex: none; }
    .start { width: 48px; display: grid; place-items: center; }
    .search { width: 344px; box-sizing: border-box; border-top: 1px solid #b8babc; background: #f1f1f1; color: #333; display: flex; align-items: center; padding: 0 15px 0 9px; font-size: 14px; }
    .search .q { flex: 1; padding-left: 9px; }
    .view { width: 50px; display: flex; align-items: center; padding-left: 15px; box-sizing: border-box; }
    .app { width: 39.100px; flex: none; display: grid; place-items: center; box-sizing: border-box; padding-top: 3px; border-bottom: 3px solid transparent; }
    .app.open { border-bottom: 3px solid #76b9ed; background-clip: padding-box; margin: 0 4.500px; width: 30.100px; }
    .app.first { margin-right: 6.500px; }
    .app.on { background: #474b4d; margin: 0 2px 0 -2px; width: 39.100px; }
    .tray { flex: 1; display: flex; align-items: center; padding-left: 24px; }
    .tray > svg { margin-right: 8px; }
    .tray .people { margin-right: 22px; }
    .tray .caret { margin-right: 12px; }
    .two { display: flex; flex-direction: column; align-items: center; padding-top: 1px; }
    .two + .two { margin-left: 12px; padding: 0; }
    .badge { position: relative; margin: -6px 0 0 17px; }
    .badge b { position: absolute; left: 7px; top: 7px; width: 15px; height: 15px; border-radius: 50%; background: #333a3e; border: 1px solid #b9bcbd; font: bold 11px/15px "Open Sans", sans-serif; text-align: center; }
    .end { margin-left: auto; width: 1px; height: 40px; background: #5d6568; margin-right: 4px; }
  `;
  render() {
    return html`
      <div class="start">${icon(16, 16, svg`<path fill="#fff" d="M0 2.300 6.500 1.400v6.100H0zM7.500 1.200 16 0v7.500H7.500zM0 8.500h6.500v6.100L0 13.700zM7.500 8.500H16V16l-8.500-1.200z"/>`)}</div>
      <div class="search">${icon(22, 22, svg`<circle cx="11" cy="11" r="9" stroke="#0b0b0b" stroke-width="3"/>`)}<span class="q">${t("Type here to search", 128)}</span>
        ${icon(12, 17, svg`<rect x="3.500" y=".600" width="5" height="10" rx="1" stroke="#333" stroke-width="1.200"/><path stroke="#333" stroke-width="1.200" d="M.6 7.500v3q0 3 3 3h4.800q3 0 3-3v-3M6 13.500V16M3 16.300h6"/>`)}</div>
      <div class="view">${icon(18, 16, svg`<path stroke="#fff" stroke-width="1.300" d="M1 0v3h11V0M1 5.500h11v5.500H1zM1 16v-3h11v3M15.500 0v2.500M15.500 8v8"/><path fill="#fff" d="M14 4h3v3h-3z"/>`)}</div>
      ${apps.map((a, i) => html`<div class="app ${a.open ? "open" : ""} ${a.on ? "on" : ""} ${i ? "" : "first"}">${icon(24, 24, a.ic)}</div>`)}
      <div class="tray">
        <svg class="people" width="16" height="16" viewBox="0 0 16 16" fill="none" stroke="#fff" stroke-width="1.200"><circle cx="10.500" cy="3.800" r="3"/><circle cx="4.500" cy="8.500" r="2.300"/><path d="M.7 15.500q0-4 3.800-4.500 3 .2 3.600 4M6.500 10.300q1-3.300 4-3.500 4 0 4.500 4.200"/></svg>
        <svg class="caret" width="14" height="8" viewBox="0 0 14 8" fill="none" stroke="#fff" stroke-width="1.300"><path d="m1 7 6-6 6 6"/></svg>
        ${icon(14, 14, svg`<g stroke="#ddd" stroke-width="1.200"><path d="M1 13Q1.500 2 13 1.500M4 13q.5-7.500 9-8.300M7 13q.5-4.800 6-5.200"/></g><circle cx="11.500" cy="11.800" r="1.500" fill="#fff"/>`)}
        ${icon(17, 11, svg`<path fill="#9a9fa1" d="M3 6Q3 1 7.500 1t5.500 5z"/><path fill="#f2f2f2" d="M3.500 11Q0 11 0 8.300T3 5.500q4-2 6 1 2-3 5-1 3 .3 3 3t-3 2.500z"/>`)}
        ${icon(16, 10, svg`<path stroke="#fff" stroke-width="1.200" d="M.6.600h13.200v8.800H.6z"/><path fill="#fff" d="M2 2h3v6H2zM14 3.500h1.500v3H14z"/>`)}
        ${icon(17, 13, svg`<path stroke="#fff" stroke-width="1.200" d="M.6 4.500h2.800L6.500 1.500v10L3.400 8.700H.6zM9 4.500q1.500 2 0 4M11.500 2.500q3 4 0 8M14 .600q4.500 6 0 11.800"/>`)}
        <div class="two">${t("ENG", 23)}${t("IN", 12)}</div>
        <div class="two">${t("18:28", 27)}${t("07-07-2019", 58)}</div>
        <div class="badge">${icon(16, 15, svg`<path fill="#fff" d="M0 0h16v12H6l-3 3v-3H0z"/><path stroke="#17191a" d="M3 3.500h10M3 6h10M3 8.500h6"/>`)}<b>2</b></div>
        <span class="end"></span>
      </div>`;
  }
}

@customElement("app-root")
class AppRoot extends LitElement {
  static styles = css`
    :host { display: flex; flex-direction: column; width: 1366px; height: 768px; overflow: hidden; background: #f1f1f1; }
    .page { flex: 1; display: flex; min-height: 0; }
    .studio { width: 1349px; display: flex; flex-direction: column; }
    .main { flex: 1; display: flex; min-height: 0; }
  `;
  render() {
    return html`
      <browser-frame></browser-frame>
      <div class="page">
        <div class="studio">
          <studio-header></studio-header>
          <div class="main"><side-rail></side-rail><module-palette></module-palette><experiment-canvas></experiment-canvas><property-panel></property-panel></div>
          <command-bar></command-bar>
        </div>
        <scroll-bar up="#a3a3a3" down="#a3a3a3"></scroll-bar>
      </div>
      <task-bar></task-bar>`;
  }
}
